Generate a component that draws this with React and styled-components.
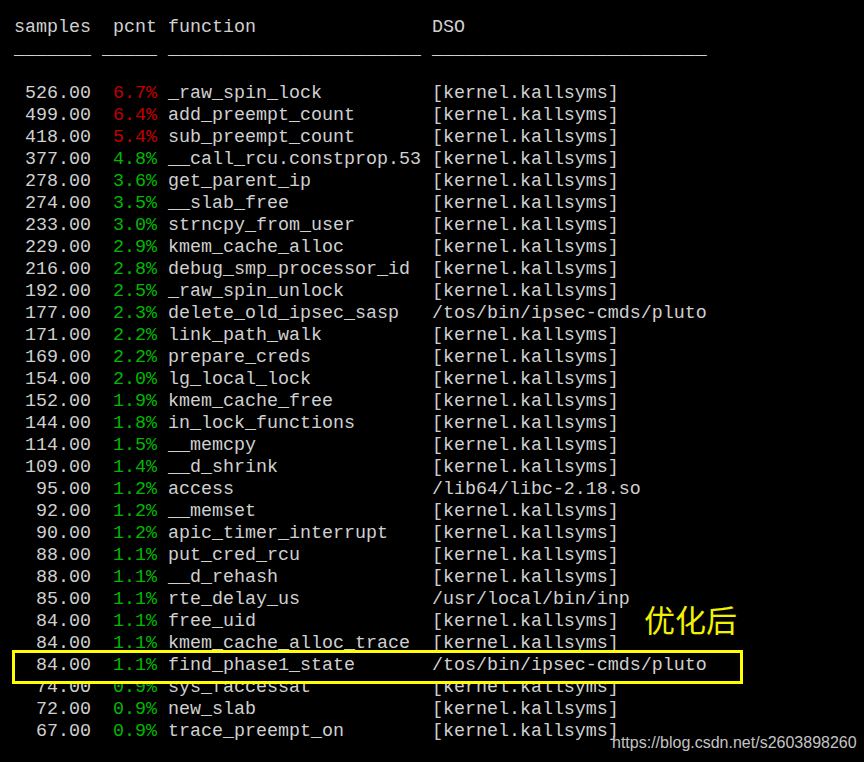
import React from "react";
import styled, { createGlobalStyle } from "styled-components";

const Global = createGlobalStyle`
  html, body { margin: 0; padding: 0; background: #000; }
  #root { background: #000; }
`;

const Terminal = styled.div`
  position: relative;
  box-sizing: border-box;
  width: 864px;
  height: 762px;
  overflow: hidden;
  background: #000;
  color: #d0d0d0;
  padding: 17px 0 0 14px;
  font-family: "Liberation Mono", "Courier New", monospace;
  font-size: 18.33px;
  line-height: 22px;
`;

const Row = styled.div`
  display: grid;
  grid-template-columns: 7ch 5ch 23ch auto;
  column-gap: 1ch;
  height: 22px;
  white-space: pre;
`;

const HighlightRow = styled(Row)`
  position: relative;
  z-index: 1;
  &::before {
    content: "";
    position: absolute;
    left: -2px;
    top: -5px;
    width: 731px;
    height: 34px;
    box-sizing: border-box;
    border: 3px solid #ffff00;
    background: #000;
    z-index: -1;
  }
`;

const Num = styled.span`
  text-align: right;
`;

const Pcnt = styled.span`
  text-align: right;
  color: ${(p) => (p.$hot ? "#c00000" : "#00b800")};
`;

const Head = styled.span`
  text-align: ${(p) => (p.$right ? "right" : "left")};
`;

const Note = styled.div`
  position: absolute;
  left: 644px;
  top: 601px;
  font-family: "Noto Sans CJK SC", sans-serif;
  font-size: 31px;
  line-height: 36px;
  color: #f2f200;
  z-index: 2;
`;

const Watermark = styled.div`
  position: absolute;
  left: 612px;
  top: 733px;
  font-family: "Liberation Sans", Arial, sans-serif;
  font-size: 16px;
  line-height: 20px;
  color: #c4c4c4;
  text-shadow: 1px 1px 1px rgba(0, 0, 0, 0.8);
  z-index: 2;
`;

const data = [
  ["526.00", "6.7%", "_raw_spin_lock", "[kernel.kallsyms]"],
  ["499.00", "6.4%", "add_preempt_count", "[kernel.kallsyms]"],
  ["418.00", "5.4%", "sub_preempt_count", "[kernel.kallsyms]"],
  ["377.00", "4.8%", "__call_rcu.constprop.53", "[kernel.kallsyms]"],
  ["278.00", "3.6%", "get_parent_ip", "[kernel.kallsyms]"],
  ["274.00", "3.5%", "__slab_free", "[kernel.kallsyms]"],
  ["233.00", "3.0%", "strncpy_from_user", "[kernel.kallsyms]"],
  ["229.00", "2.9%", "kmem_cache_alloc", "[kernel.kallsyms]"],
  ["216.00", "2.8%", "debug_smp_processor_id", "[kernel.kallsyms]"],
  ["192.00", "2.5%", "_raw_spin_unlock", "[kernel.kallsyms]"],
  ["177.00", "2.3%", "delete_old_ipsec_sasp", "/tos/bin/ipsec-cmds/pluto"],
  ["171.00", "2.2%", "link_path_walk", "[kernel.kallsyms]"],
  ["169.00", "2.2%", "prepare_creds", "[kernel.kallsyms]"],
  ["154.00", "2.0%", "lg_local_lock", "[kernel.kallsyms]"],
  ["152.00", "1.9%", "kmem_cache_free", "[kernel.kallsyms]"],
  ["144.00", "1.8%", "in_lock_functions", "[kernel.kallsyms]"],
  ["114.00", "1.5%", "__memcpy", "[kernel.kallsyms]"],
  ["109.00", "1.4%", "__d_shrink", "[kernel.kallsyms]"],
  ["95.00", "1.2%", "access", "/lib64/libc-2.18.so"],
  ["92.00", "1.2%", "__memset", "[kernel.kallsyms]"],
  ["90.00", "1.2%", "apic_timer_interrupt", "[kernel.kallsyms]"],
  ["88.00", "1.1%", "put_cred_rcu", "[kernel.kallsyms]"],
  ["88.00", "1.1%", "__d_rehash", "[kernel.kallsyms]"],
  ["85.00", "1.1%", "rte_delay_us", "/usr/local/bin/inp"],
  ["84.00", "1.1%", "free_uid", "[kernel.kallsyms]"],
  ["84.00", "1.1%", "kmem_cache_alloc_trace", "[kernel.kallsyms]"],
  ["84.00", "1.1%", "find_phase1_state", "/tos/bin/ipsec-cmds/pluto", true],
  ["74.00", "0.9%", "sys_faccessat", "[kernel.kallsyms]"],
  ["72.00", "0.9%", "new_slab", "[kernel.kallsyms]"],
  ["67.00", "0.9%", "trace_preempt_on", "[kernel.kallsyms]"],
];

export default function App() {
  return (
    <>
      <Global />
      <Terminal>
        <Row>
          <Head>samples</Head>
          <Head $right>pcnt</Head>
          <Head>function</Head>
          <Head>DSO</Head>
        </Row>
        <Row>
          <Head>{"_______"}</Head>
          <Head>{"_____"}</Head>
          <Head>{"_______________________"}</Head>
          <Head>{"_________________________"}</Head>
        </Row>
        <Row />
        {data.map(([n, p, f, d, hl], i) => {
          const R = hl ? HighlightRow : Row;
          return (
            <R key={i}>
              <Num>{n}</Num>
              <Pcnt $hot={parseFloat(p) >= 5}>{p}</Pcnt>
              <span>{f}</span>
              <span>{d}</span>
            </R>
          );
        })}
        <Note>优化后</Note>
        <Watermark>https://blog.csdn.net/s2603898260</Watermark>
      </Terminal>
    </>
  );
}
